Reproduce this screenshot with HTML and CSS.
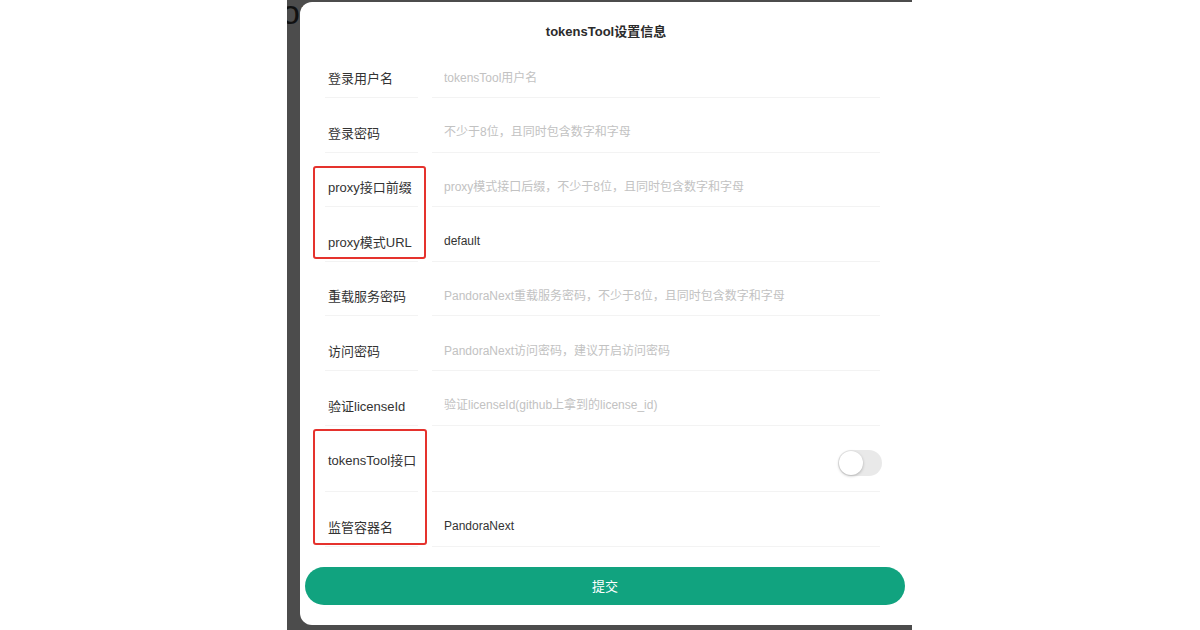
FILE: index.html
```html
<!DOCTYPE html>
<html lang="zh-CN">
<head>
    <meta charset="UTF-8">
    <meta name="viewport" content="width=device-width, initial-scale=1.0">
    <title>tokensTool设置信息</title>
    <link rel="stylesheet" href="styles.css">
</head>
<body>
    <div class="frame">
        <div class="backdrop-text">on</div>
        <div class="modal">
            <h2>tokensTool设置信息</h2>
            <form class="form" id="settingsForm">
                <div class="row">
                    <label for="username">登录用户名</label>
                    <div class="field"><input id="username" placeholder="tokensTool用户名"></div>
                </div>
                <div class="row">
                    <label for="password">登录密码</label>
                    <div class="field"><input id="password" placeholder="不少于8位，且同时包含数字和字母"></div>
                </div>
                <div class="row">
                    <label for="prefix">proxy接口前缀</label>
                    <div class="field"><input id="prefix" placeholder="proxy模式接口后缀，不少于8位，且同时包含数字和字母"></div>
                </div>
                <div class="row">
                    <label for="proxyUrl">proxy模式URL</label>
                    <div class="field"><input id="proxyUrl" value="default"></div>
                </div>
                <div class="row">
                    <label for="reload">重载服务密码</label>
                    <div class="field"><input id="reload" placeholder="PandoraNext重载服务密码，不少于8位，且同时包含数字和字母"></div>
                </div>
                <div class="row">
                    <label for="access">访问密码</label>
                    <div class="field"><input id="access" placeholder="PandoraNext访问密码，建议开启访问密码"></div>
                </div>
                <div class="row">
                    <label for="license">验证licenseId</label>
                    <div class="field"><input id="license" placeholder="验证licenseId(github上拿到的license_id)"></div>
                </div>
                <div class="row row-switch">
                    <label>tokensTool接口</label>
                    <div class="field"><span class="switch"><span class="knob"></span></span></div>
                </div>
                <div class="row">
                    <label for="container">监管容器名</label>
                    <div class="field"><input id="container" value="PandoraNext"></div>
                </div>
                <button type="submit">提交</button>
            </form>
            <div class="mark mark-proxy"></div>
            <div class="mark mark-tool"></div>
        </div>
    </div>
</body>
</html>
```

FILE: styles.css
```css
body {
    margin: 0;
    background: #fff;
    font-family: 'Liberation Sans', 'Noto Sans CJK SC', sans-serif;
    display: flex;
    justify-content: center;
}
.frame {
    position: relative;
    width: 625px;
    height: 630px;
    box-sizing: border-box;
    padding: 2px 0 5px 13px;
    background: #4c4c4c;
    overflow: hidden;
    margin-left: -1px;
}
.backdrop-text {
    position: absolute;
    left: -6px;
    top: -7px;
    font-size: 34px;
    color: #111;
    font-family: 'Liberation Sans', sans-serif;
}
.modal {
    position: relative;
    height: 100%;
    background: #fff;
    border-radius: 12px 0 0 12px;
}
h2 {
    margin: 0;
    padding-top: 20px;
    height: 20px;
    line-height: 20px;
    text-align: center;
    font-size: 13px;
    font-weight: 700;
    color: #2b2b2b;
}
.form {
    display: flex;
    flex-direction: column;
    padding-top: 1.5px;
}
.row {
    display: flex;
    gap: 14px;
    margin: 14.6px 32px 0 25px;
    height: 40px;
}
.row label, .row .field {
    display: flex;
    align-items: center;
    border-bottom: 1px solid #f3f3f3;
    box-sizing: border-box;
}
.row label {
    width: 93px;
    padding-left: 3px;
    font-size: 13px;
    color: #333;
}
.row .field {
    flex: 1;
    padding-left: 12px;
}
.row input {
    width: 100%;
    border: none;
    outline: none;
    padding: 0;
    font-family: inherit;
    font-size: 12px;
    color: #333;
    background: transparent;
}
.row input::placeholder {
    color: #c2c2c2;
}
.row-switch {
    height: 52px;
}
.row-switch label {
    align-items: flex-start;
    padding-top: 11px;
    line-height: 20px;
}
.row-switch .field {
    align-items: flex-start;
    justify-content: flex-end;
    padding-top: 10px;
}
.switch {
    display: block;
    width: 44px;
    height: 26px;
    border-radius: 13px;
    background: #e9e9e9;
    margin-right: -2px;
}
.knob {
    display: block;
    width: 24px;
    height: 24px;
    margin: 1px;
    border-radius: 50%;
    background: #fff;
    box-shadow: 0 1px 3px rgba(0,0,0,0.25);
}
button {
    margin: 20px 7px 0 5px;
    height: 38px;
    border: none;
    border-radius: 19px;
    background: #11a37f;
    color: #fff;
    font-family: inherit;
    font-size: 13px;
    cursor: pointer;
}
.mark {
    position: absolute;
    left: 13px;
    width: 113px;
    border: 2px solid #e5322d;
    border-radius: 3px;
    box-sizing: border-box;
}
.mark-proxy {
    top: 164px;
    height: 93px;
}
.mark-tool {
    top: 427px;
    width: 114px;
    height: 116px;
}
```
